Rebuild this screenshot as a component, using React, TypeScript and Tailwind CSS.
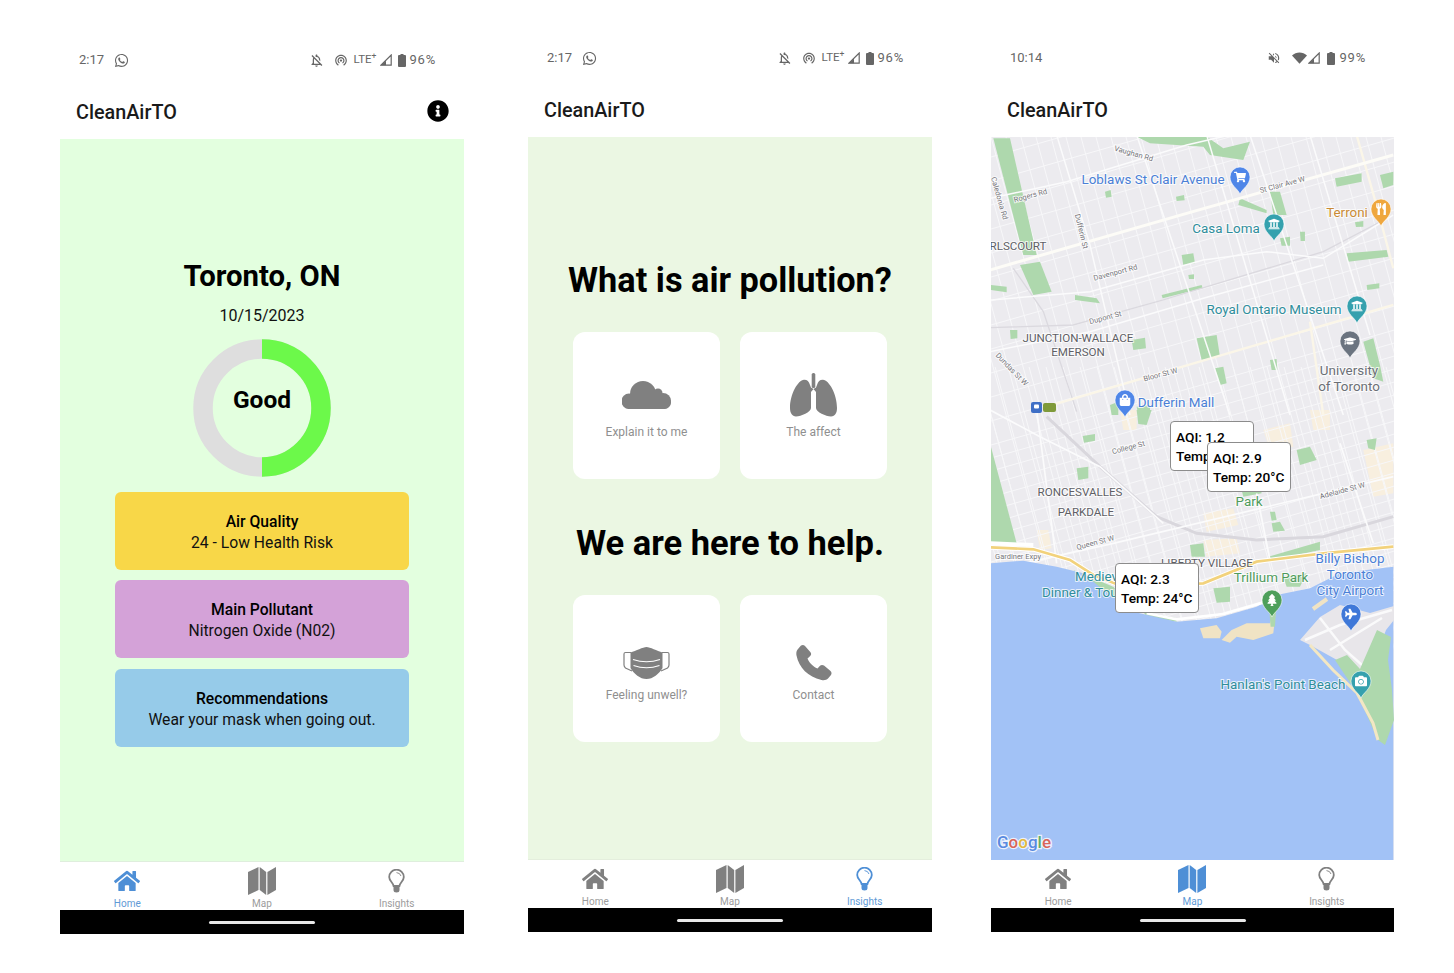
import type { ReactNode } from "react";
import {
  FaCamera,
  FaGraduationCap,
  FaHome,
  FaInfoCircle,
  FaPlane,
  FaShoppingBag,
  FaShoppingCart,
  FaTree,
  FaUniversity,
  FaUtensils,
  FaWhatsapp,
} from "react-icons/fa";
import { MdOutlineNotificationsOff, MdVolumeOff, MdWifiTethering } from "react-icons/md";

const TOP = "translate(-1 -2) scale(0.3333)";
const BOTTOM = "translate(-1 273) scale(0.3333)";
const PAGE = "translate(-991 -137)";

// minor street grid, tilted like Toronto's
const eastWest: string[] = [];
for (let c = 20; c < 600; c += c > 290 ? 13 : 24) {
  eastWest.push(`M0 ${c}L403 ${c - 0.285 * 403}`);
}
const northSouth: string[] = [];
for (let d = -150; d < 403; d += 15) {
  northSouth.push(`M${d} 0L${d + 0.27 * 540} 540`);
}
for (let d = -160; d < 403; d += 17) {
  northSouth.push(`M${d + 0.27 * 230} 230L${d + 0.27 * 520} 520`);
}

const topParks = [
  "10,10 60,10 140,360 100,360",
  "90,390 150,380 185,470 130,480",
  "0,450 50,455 50,472 0,465",
  "440,5 650,5 700,40 780,20 760,75 660,60 640,35 480,25",
  "750,190 830,225 830,235 745,210",
  "840,170 870,170 890,240 850,240",
  "1035,130 1115,115 1115,140 1040,155",
  "1170,120 1210,110 1210,150 1180,160",
  "1070,355 1190,345 1195,365 1075,380",
  "575,360 610,355 615,385 580,390",
  "620,610 680,600 690,665 635,675",
  "675,700 700,695 710,745 690,750",
  "1120,620 1150,610 1170,690 1180,740 1150,730",
  "425,615 465,608 468,640 430,645",
  "345,170 362,165 365,185 348,188",
  "558,185 582,180 584,196 560,198",
  "255,480 320,490 330,505 255,495",
  "60,585 82,585 82,610 62,612",
  "515,480 635,450 638,460 518,490",
  "930,290 945,290 945,318 932,318",
  "870,310 900,305 900,332 875,332",
  "1095,262 1120,258 1120,275 1098,276",
  "595,420 612,418 612,432 597,432",
  "1130,450 1168,445 1168,460 1132,465",
  "840,675 860,672 862,705 845,705",
  "360,810 385,800 385,840 365,840",
  "440,815 480,810 480,840 445,840",
];

const bottomParks = [
  "0,100 80,400 0,400",
  "440,0 485,0 470,45 445,42",
  "260,175 295,170 295,205 265,210",
  "278,78 315,72 315,92 282,98",
  "600,405 640,400 645,440 605,440",
  "670,535 720,530 720,575 680,578",
  "920,120 960,110 980,150 930,165",
  "1130,90 1160,85 1155,120 1135,115",
  "840,305 855,305 860,330 845,332",
  "845,340 870,335 885,362 850,365",
  "835,440 990,395 990,420 850,450",
  "880,500 950,490 930,530 890,530",
  "755,240 810,225 815,250 760,260",
  "250,480 370,530 430,600 350,560",
  "460,605 560,625 560,635 470,620",
];

const yellowBlocks = [
  "640,310 730,295 745,345 650,365",
  "640,390 740,385 750,430 650,440",
  "390,0 440,0 440,60 400,60",
  "960,0 1020,0 1020,60 970,60",
  "140,360 175,360 185,415 150,420",
  "1120,120 1210,100 1210,250 1150,260",
  "820,60 900,40 910,110 840,120",
];

function Label({
  x,
  y,
  size,
  color,
  children,
  rotate,
  anchor = "middle",
}: {
  x: number;
  y: number;
  size: number;
  color: string;
  children: ReactNode;
  rotate?: number;
  anchor?: "start" | "middle" | "end";
}) {
  return (
    <text
      x={x}
      y={y}
      fontSize={size}
      fill={color}
      textAnchor={anchor}
      stroke="#ffffff"
      strokeWidth={2}
      strokeOpacity={0.75}
      paintOrder="stroke"
      transform={rotate ? `rotate(${rotate} ${x} ${y})` : undefined}
    >
      {children}
    </text>
  );
}

function Pin({ x, y, color, children }: { x: number; y: number; color: string; children: ReactNode }) {
  // x,y is the middle of the round head
  return (
    <g transform={`translate(${x} ${y})`}>
      <path
        d="M0 17C-2 12-10 8-10 0a10 10 0 0 1 20 0C10 8 2 12 0 17Z"
        fill={color}
        stroke="#ffffff"
        strokeOpacity={0.7}
        strokeWidth={0.8}
      />
      <g transform="translate(-6 -6)">{children}</g>
    </g>
  );
}

function MapCanvas() {
  return (
    <svg viewBox="0 0 403 723" className="block h-full w-full" fontFamily="Roboto, sans-serif">
      <rect width="403" height="723" fill="#ecebef" />

      <g transform={BOTTOM}>
        {yellowBlocks.map((p) => (
          <polygon key={p} points={p} fill="#f8efdf" />
        ))}
      </g>

      <g stroke="#f7f7f9" strokeWidth="1" fill="none">
        {eastWest.map((d) => (
          <path key={d} d={d} />
        ))}
        {northSouth.map((d) => (
          <path key={d} d={d} />
        ))}
      </g>

      <g transform={TOP}>
        {topParks.map((p) => (
          <polygon key={p} points={p} fill="#aed8ad" />
        ))}
        <g fill="none" stroke="#dbd9df" strokeWidth="4">
          <path d="M0 578L250 570L520 495L800 410L1000 350L1210 240" />
          <path d="M70 400L160 530L260 830" />
        </g>
        <g fill="none" stroke="#fbf6e8" strokeWidth="7">
          <path d="M170 815L560 700L800 630L1210 510" />
          <path d="M1100 0L1165 230L1210 400" />
          <path d="M960 560L1000 840" />
        </g>
        <g fill="none" stroke="#fdfcf7" strokeWidth="9">
          <path d="M0 405L590 235L1210 60" />
        </g>
        <g fill="none" stroke="#fbfbfc" strokeWidth="4.5">
          <path d="M0 495L300 470L640 375L830 350L1000 370L1210 240" />
          <path d="M0 650L300 590L640 490L1000 390" />
          <path d="M200 0L300 330L420 840" />
          <path d="M440 0L720 840" />
          <path d="M650 0L900 840" />
          <path d="M780 0L1060 840" />
          <path d="M0 190L230 140L590 30L720 0" />
          <path d="M960 0L1140 600" />
        </g>
      </g>

      <g transform={BOTTOM}>
        {bottomParks.map((p) => (
          <polygon key={p} points={p} fill="#aed8ad" />
        ))}
        <g fill="none" stroke="#d9d7dd" strokeWidth="9">
          <path d="M170 20L330 170L500 320L620 370L800 390L1000 380L1210 320" />
        </g>
        <g fill="none" stroke="#fbfbfc" strokeWidth="5">
          <path d="M0 0L150 80L330 170L520 340" />
          <path d="M100 460L370 400L1210 200" />
          <path d="M140 0L200 460" />
          <path d="M800 250L840 450" />
          <path d="M1050 100L1150 400" />
        </g>
        <path d="M0 400L130 405" stroke="#ffffff" strokeWidth="12" fill="none" />
        <path
          d="M0 412L130 418L240 450L310 495L400 530L640 520L800 455L1000 430L1210 410"
          fill="none"
          stroke="#ffffff"
          strokeWidth="14"
        />
        <path
          d="M0 412L130 418L240 450L310 495L400 530L640 520L800 455L1000 430L1210 410"
          fill="none"
          stroke="#f2d27c"
          strokeWidth="8"
        />

        {/* lake */}
        <polygon
          points="0,460 100,452 200,470 280,490 340,540 430,605 560,635 680,625 800,590 860,555 960,535 1050,490 1210,470 1210,1400 0,1400"
          fill="#a2c2f6"
        />
        <path d="M470 610L560 628L700 612L830 575" fill="none" stroke="#ffffff" strokeWidth="8" />

        {/* islands */}
        <polygon points="630,655 680,645 695,665 690,685 640,685" fill="#f0e3c4" />
        <polygon points="695,690 725,660 770,640 840,640 848,612 856,614 850,670 790,690 740,680 720,698" fill="#f0e3c4" />
        <polygon points="838,600 858,600 855,650 842,650" fill="#aed8ad" />
      </g>

      {/* airport island and beach, in page coordinates */}
      <g transform={PAGE}>
        <path d="M1313 609L1327 599" fill="none" stroke="#f0e3c4" strokeWidth="4" />
        <polygon
          points="1300,640 1320,617 1340,605 1370,613 1394,606 1394,620 1386,630 1372,668 1360,672 1337,660 1310,645"
          fill="#e8e6ea"
        />
        <path
          d="M1305 640L1340 625L1392 610M1320 618L1345 650L1362 665M1330 650L1382 618"
          fill="none"
          stroke="#fafafb"
          strokeWidth="2.5"
        />
        <polygon
          points="1335,660 1347,655 1360,669 1377,630 1391,637 1388,660 1392,690 1394,720 1385,745 1378,740 1357,693"
          fill="#aed8ad"
        />
        <path d="M1310 645L1333 670L1357 693L1373 723L1378 740" fill="none" stroke="#f3e7c3" strokeWidth="3" />
      </g>

      {/* neighbourhoods and roads */}
      <Label x={142} y={19} size={7.5} color="#77767b" rotate={16}>Vaughan Rd</Label>
      <Label x={40} y={61} size={7.5} color="#77767b" rotate={-15}>Rogers Rd</Label>
      <Label x={6} y={62} size={7.5} color="#77767b" rotate={74}>Caledonia Rd</Label>
      <Label x={88} y={95} size={7.5} color="#77767b" rotate={76}>Dufferin St</Label>
      <Label x={292} y={50} size={7.5} color="#77767b" rotate={-15}>St Clair Ave W</Label>
      <Label x={125} y={138} size={7.5} color="#77767b" rotate={-15}>Davenport Rd</Label>
      <Label x={115} y={183} size={7.5} color="#77767b" rotate={-15}>Dupont St</Label>
      <Label x={19} y={234} size={7.5} color="#77767b" rotate={46}>Dundas St W</Label>
      <Label x={170} y={240} size={7.5} color="#77767b" rotate={-15}>Bloor St W</Label>
      <Label x={138} y={313} size={7.5} color="#77767b" rotate={-15}>College St</Label>
      <Label x={352} y={356} size={7.5} color="#77767b" rotate={-15}>Adelaide St W</Label>
      <Label x={105} y={408} size={7.5} color="#77767b" rotate={-15}>Queen St W</Label>
      <Label x={27} y={422} size={7.5} color="#77767b">Gardiner Expy</Label>

      <Label x={27} y={113} size={11.6} color="#5f5f66">RLSCOURT</Label>
      <Label x={87} y={205} size={11.6} color="#5f5f66">JUNCTION-WALLACE</Label>
      <Label x={87} y={219} size={11.6} color="#5f5f66">EMERSON</Label>
      <Label x={89} y={359} size={11.6} color="#5f5f66">RONCESVALLES</Label>
      <Label x={95} y={379} size={11.6} color="#5f5f66">PARKDALE</Label>
      <Label x={216} y={430} size={11.6} color="#5f5f66">LIBERTY VILLAGE</Label>

      <Label x={162} y={47} size={13.4} color="#4a7fd6">Loblaws St Clair Avenue</Label>
      <Label x={235} y={96} size={13.4} color="#2f8d9b">Casa Loma</Label>
      <Label x={356} y={80} size={13.4} color="#c98a35">Terroni</Label>
      <Label x={283} y={177} size={13.4} color="#2f8d9b">Royal Ontario Museum</Label>
      <Label x={358} y={238} size={13.4} color="#6b6f76">University</Label>
      <Label x={358} y={254} size={13.4} color="#6b6f76">of Toronto</Label>
      <Label x={185} y={270} size={13.4} color="#4a7fd6">Dufferin Mall</Label>
      <Label x={258} y={369} size={13.4} color="#4f9a5c">Park</Label>
      <Label x={280} y={445} size={13.4} color="#4f9a5c">Trillium Park</Label>
      <Label x={359} y={426} size={13.4} color="#4a7fd6">Billy Bishop</Label>
      <Label x={359} y={442} size={13.4} color="#4a7fd6">Toronto</Label>
      <Label x={359} y={458} size={13.4} color="#4a7fd6">City Airport</Label>
      <Label x={84} y={444} size={13.4} color="#2f8d9b" anchor="start">Mediev</Label>
      <Label x={51} y={460} size={13.4} color="#2f8d9b" anchor="start">Dinner &amp; Tou</Label>
      <Label x={292} y={552} size={13.4} color="#2f8d9b">Hanlan's Point Beach</Label>

      <Pin x={249} y={40} color="#4f86e8"><FaShoppingCart x={0} y={0} size={12} color="#ffffff" /></Pin>
      <Pin x={283} y={87} color="#35a1ae"><FaUniversity x={0} y={0} size={12} color="#ffffff" /></Pin>
      <Pin x={390} y={72} color="#efa73e"><FaUtensils x={0} y={0} size={12} color="#ffffff" /></Pin>
      <Pin x={366} y={169} color="#35a1ae"><FaUniversity x={0} y={0} size={12} color="#ffffff" /></Pin>
      <Pin x={359} y={204} color="#6b7480"><FaGraduationCap x={0} y={0} size={12} color="#ffffff" /></Pin>
      <Pin x={134} y={263} color="#4f86e8"><FaShoppingBag x={0} y={0} size={12} color="#ffffff" /></Pin>
      <Pin x={281} y={463} color="#4e9f5b"><FaTree x={0} y={0} size={12} color="#ffffff" /></Pin>
      <Pin x={360} y={477} color="#3f78d8"><FaPlane x={0} y={0} size={12} color="#ffffff" /></Pin>
      <Pin x={370} y={544} color="#35a1ae"><FaCamera x={0} y={0} size={12} color="#ffffff" /></Pin>

      {/* transit badge */}
      <rect x="40" y="265" width="11" height="11" rx="2" fill="#3f6fc6" />
      <rect x="43" y="267.5" width="5" height="4" rx="1" fill="#ffffff" />
      <rect x="52" y="266" width="13" height="9" rx="2" fill="#7f9a3a" />

      {/* google wordmark */}
      <text x="6" y="711" fontSize="17" fontWeight="500" stroke="#ffffff" strokeWidth="2.5" strokeOpacity="0.8" paintOrder="stroke">
        <tspan fill="#5a8ae0">G</tspan>
        <tspan fill="#d9655a">o</tspan>
        <tspan fill="#e3b93f">o</tspan>
        <tspan fill="#5a8ae0">g</tspan>
        <tspan fill="#5fae6a">l</tspan>
        <tspan fill="#d9655a">e</tspan>
      </text>
    </svg>
  );
}

function Callout({ className, aqi, temp }: { className: string; aqi: string; temp: string }) {
  return (
    <div
      className={`absolute flex h-[50px] w-[84px] flex-col justify-center rounded border border-[#8c8c8c] bg-white pt-[2px] pl-[5px] text-[13.7px] leading-[19px] font-medium text-black ${className}`}
    >
      <span>AQI: {aqi}</span>
      <span>Temp: {temp}</span>
    </div>
  );
}

function MapIcon({ className }: { className: string }) {
  return (
    <svg viewBox="0 0 28 28" width="28" height="28" className={className} fill="currentColor">
      <path d="M0 5L10.5 0V23L0 28Z" />
      <path d="M11.7 0L18.2 5V28L11.7 23Z" />
      <path d="M19.4 5L28 0V23L19.4 28Z" />
    </svg>
  );
}

function BulbIcon({ className }: { className: string }) {
  return (
    <svg viewBox="0 0 17 24" width="17" height="24" className={className} fill="none" stroke="currentColor">
      <path
        d="M5.6 17C5 13.5 1.2 12 1.2 8A7.3 7.3 0 0 1 15.8 8C15.8 12 12 13.5 11.4 17Z"
        strokeWidth="1.8"
      />
      <path d="M5.5 17H11.5V21Q11.5 23.5 8.5 23.5T5.5 21Z" fill="currentColor" stroke="none" />
      <path d="M8.5 3.6Q12 3.8 13 7" strokeWidth="0.9" />
    </svg>
  );
}

function CloudIcon() {
  return (
    <svg viewBox="0 0 49 28" width="49" height="28" fill="#808080">
      <rect x="0" y="15" width="49" height="13" rx="6.5" />
      <circle cx="21" cy="13" r="13" />
      <circle cx="36" cy="12" r="4.5" />
      <circle cx="41" cy="20" r="8" />
      <circle cx="7" cy="20" r="7.5" />
    </svg>
  );
}

function LungsIcon() {
  return (
    <svg viewBox="0 0 47 44" width="47" height="44" fill="#808080">
      <rect x="21.7" y="0" width="3.6" height="15" rx="1.6" />
      <path d="M14 6.8C8 7.2 0 21 0 35C0 40 2 43.4 6 43.4C11 43.4 21 39 21 35V19L23.5 16L21 14.5L20 12C19 8.5 17 6.6 14 6.8Z" />
      <path d="M33 6.8C39 7.2 47 21 47 35C47 40 45 43.4 41 43.4C36 43.4 26 39 26 35V19L23.5 16L26 14.5L27 12C28 8.5 30 6.6 33 6.8Z" />
    </svg>
  );
}

function MaskIcon() {
  return (
    <svg viewBox="0 0 47 32" width="47" height="32">
      <path
        d="M8 5.5L2.5 5.5Q1 5.5 1 7V18Q1 19.5 2.5 21L9 24M39 5.5L44.5 5.5Q46 5.5 46 7V18Q46 19.5 44.5 21L38 24"
        fill="none"
        stroke="#808080"
        strokeWidth="1.2"
      />
      <path
        d="M23.5 0C20 0 13 4 7.5 5.5L7.5 21C11 27 17 32 23.5 32S36 27 39.5 21L39.5 5.5C34 4 27 0 23.5 0Z"
        fill="#808080"
      />
      <path d="M10 12.5Q23.5 17 37 12.5M10.5 18.5Q23.5 23 36.5 18.5" fill="none" stroke="#ffffff" strokeWidth="1.2" />
    </svg>
  );
}

function PhoneIcon() {
  return (
    <svg viewBox="0 0 36 36" width="36" height="36" fill="#808080">
      <path d="M5 .6C6.5-.4 8 0 9 1L14.5 7.2C15.5 8.5 15.3 10 14.2 11L11.5 13.5C13 17.5 17 21.5 21.5 23.5L24 20.8C25 19.7 26.8 19.6 28 20.6L34.5 26C35.8 27.2 35.8 29 34.8 30.2L32 33.5C30.5 35.2 28 35.5 25.5 35C12 32 3 22.5.5 10.5C0 8 .5 5.5 2 4Z" />
    </svg>
  );
}

function SignalIcon() {
  return (
    <svg viewBox="0 0 12 12" width="12" height="12">
      <path d="M11.2 1V11.2H1Z" fill="none" stroke="#666666" strokeWidth="1.2" />
      <path d="M6 6.5V11.2H1Z" fill="#666666" />
    </svg>
  );
}

function BatteryIcon() {
  return (
    <svg viewBox="0 0 8 13" width="8" height="13">
      <path d="M2.5 0H5.5V1H7Q8 1 8 2V12Q8 13 7 13H1Q0 13 0 12V2Q0 1 1 1H2.5Z" fill="#666666" />
    </svg>
  );
}

function WifiFilled() {
  return (
    <svg viewBox="0 0 16 12" width="15" height="12">
      <path d="M8 12L0 3.2C4.5-1 11.5-1 16 3.2Z" fill="#666666" />
    </svg>
  );
}

function StatusBar({ time, battery, whatsapp, wifi }: { time: string; battery: string; whatsapp?: boolean; wifi?: boolean }) {
  return (
    <div className="flex h-10 items-center justify-between pr-[28px] pl-[19px] text-[13px] text-[#666666]">
      <div className="flex items-center gap-[10px]">
        <span>{time}</span>
        {whatsapp && <FaWhatsapp size={15} />}
      </div>
      {wifi ? (
        <div className="flex items-center">
          <MdVolumeOff size={14} className="mr-[11px]" />
          <WifiFilled />
          <span className="mr-[7px] ml-[1px]">
            <SignalIcon />
          </span>
          <BatteryIcon />
          <span className="ml-[4px] tracking-[0.8px]">{battery}</span>
        </div>
      ) : (
        <div className="flex items-center">
          <MdOutlineNotificationsOff size={15} className="mr-[10px]" />
          <MdWifiTethering size={14} className="mr-[6px]" />
          <span className="mr-[4px] text-[11.5px] leading-none">
            LTE<sup>+</sup>
          </span>
          <SignalIcon />
          <span className="ml-[6px]">
            <BatteryIcon />
          </span>
          <span className="ml-[3px] tracking-[0.8px]">{battery}</span>
        </div>
      )}
    </div>
  );
}

function Header({ info }: { info?: boolean }) {
  return (
    <div className="flex h-[59px] items-center justify-between pt-[7px] pr-[15px] pl-4">
      <span className="text-[19.8px] font-medium text-[#1a1a1a]">CleanAirTO</span>
      {info && <FaInfoCircle size={22} color="#000000" className="-mt-[4px]" />}
    </div>
  );
}

function Tabs({ active }: { active: "Home" | "Map" | "Insights" }) {
  const color = (name: string) => (active === name ? "text-[#4e8fd6]" : "text-[#808080]");
  const label = (name: string) => (active === name ? "text-[#5f9ad6]" : "text-[#9c9c9c]");
  return (
    <div className="grid h-12 grid-cols-3 bg-white">
      <div className="flex flex-col items-center pt-[5px]">
        <div className={`flex h-7 items-center ${color("Home")}`}>
          <FaHome size={26} />
        </div>
        <span className={`mt-[3px] text-[10px] leading-3 ${label("Home")}`}>Home</span>
      </div>
      <div className="flex flex-col items-center pt-[5px]">
        <div className="flex h-7 items-center">
          <MapIcon className={color("Map")} />
        </div>
        <span className={`mt-[3px] text-[10px] leading-3 ${label("Map")}`}>Map</span>
      </div>
      <div className="flex flex-col items-center pt-[5px]">
        <div className="flex h-7 items-center">
          <BulbIcon className={color("Insights")} />
        </div>
        <span className={`mt-[3px] text-[10px] leading-3 ${label("Insights")}`}>Insights</span>
      </div>
    </div>
  );
}

function NavBar() {
  return (
    <div className="flex h-6 items-center justify-center bg-black">
      <div className="h-[3px] w-[106px] rounded-full bg-[#e8e8e8]" />
    </div>
  );
}

function InfoCard({ title, body, className }: { title: string; body: string; className: string }) {
  return (
    <div className={`flex h-[78px] w-[294px] flex-col items-center justify-center rounded-md pt-px text-[15.7px] leading-[21px] text-[#111111] ${className}`}>
      <span className="font-medium text-black">{title}</span>
      <span>{body}</span>
    </div>
  );
}

function TileCard({ label, lower, children }: { label: string; lower?: boolean; children: ReactNode }) {
  return (
    <div className="flex h-[147px] flex-col items-center rounded-xl bg-white pt-[38px]">
      <div className={`flex h-[50px] items-center ${lower ? "pt-[10px]" : ""}`}>{children}</div>
      <span className="mt-1 text-[12px] leading-4 text-[#8f8f8f]">{label}</span>
    </div>
  );
}

export default function App() {
  return (
    <div className="flex h-[973px] w-[1454px] overflow-hidden bg-white font-[Roboto,sans-serif]">
      {/* Home */}
      <div className="mt-10 ml-[60px] w-[404px]">
        <StatusBar time="2:17" battery="96%" whatsapp />
        <Header info />
        <main className="flex h-[723px] flex-col items-center border-b border-[#dfeedd] bg-[#e3ffdf] pt-[120px]">
          <h1 className="text-[29.3px] leading-[34px] font-bold text-black">Toronto, ON</h1>
          <p className="mt-[11px] text-[16px] leading-6 text-[#111111]">10/15/2023</p>
          <div className="relative mt-[11px] h-[138px] w-[138px]">
            <svg viewBox="0 0 138 138" width="138" height="138">
              <circle cx="69" cy="69" r="59" fill="none" stroke="#dedede" strokeWidth="19.5" />
              <path d="M69 10A59 59 0 0 1 69 128" fill="none" stroke="#6cf94a" strokeWidth="19.5" />
            </svg>
            <div className="absolute inset-0 flex items-center justify-center text-[24.5px] font-bold text-black">
              <span className="-mt-[16px]">Good</span>
            </div>
          </div>
          <div className="mt-[15px] flex flex-col gap-[10px]">
            <InfoCard title="Air Quality" body="24 - Low Health Risk" className="bg-[#f8d748]" />
            <InfoCard title="Main Pollutant" body="Nitrogen Oxide (N02)" className="bg-[#d4a2d8]" />
            <InfoCard title="Recommendations" body="Wear your mask when going out." className="mt-px bg-[#96cbe9]" />
          </div>
        </main>
        <Tabs active="Home" />
        <NavBar />
      </div>

      {/* Insights */}
      <div className="mt-[38px] ml-[64px] w-[404px]">
        <StatusBar time="2:17" battery="96%" whatsapp />
        <Header />
        <main className="h-[723px] border-b border-[#e4eedd] bg-[#ebf7e3] pt-[123px]">
          <h2 className="text-center text-[34.3px] leading-10 font-bold text-black">What is air pollution?</h2>
          <div className="mx-[45px] mt-8 grid grid-cols-2 gap-5">
            <TileCard label="Explain it to me">
              <CloudIcon />
            </TileCard>
            <TileCard label="The affect">
              <LungsIcon />
            </TileCard>
          </div>
          <h2 className="mt-11 text-center text-[34.5px] leading-10 font-bold text-black">We are here to help.</h2>
          <div className="mx-[45px] mt-8 grid grid-cols-2 gap-5">
            <TileCard label="Feeling unwell?" lower>
              <MaskIcon />
            </TileCard>
            <TileCard label="Contact" lower>
              <PhoneIcon />
            </TileCard>
          </div>
        </main>
        <Tabs active="Insights" />
        <NavBar />
      </div>

      {/* Map */}
      <div className="mt-[38px] ml-[59px] w-[403px]">
        <StatusBar time="10:14" battery="99%" wifi />
        <Header />
        <main className="relative h-[723px]">
          <MapCanvas />
          <Callout className="top-[284px] left-[179px]" aqi="1.2" temp="18°C" />
          <Callout className="top-[305px] left-[216px]" aqi="2.9" temp="20°C" />
          <Callout className="top-[426px] left-[124px]" aqi="2.3" temp="24°C" />
        </main>
        <Tabs active="Map" />
        <NavBar />
      </div>
    </div>
  );
}
